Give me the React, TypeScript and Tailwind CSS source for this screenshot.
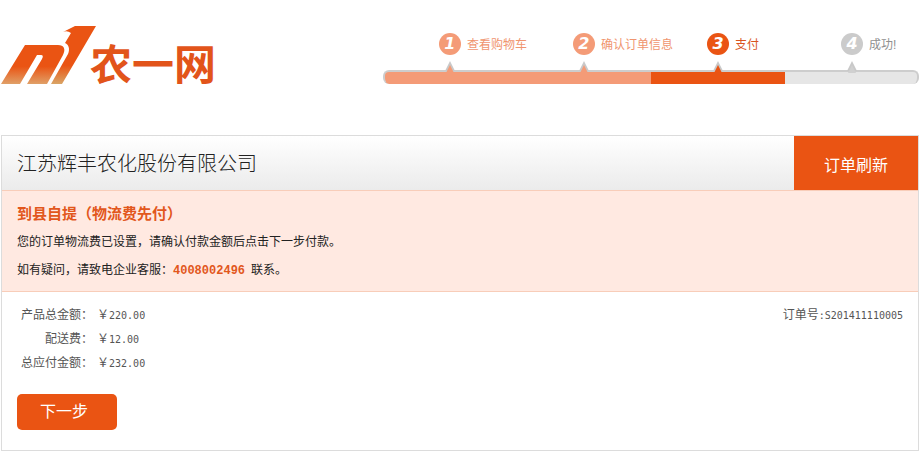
import clsx from "clsx";

type StepState = "done" | "current" | "todo";

const steps: { label: string; state: StepState }[] = [
  { label: "查看购物车", state: "done" },
  { label: "确认订单信息", state: "done" },
  { label: "支付", state: "current" },
  { label: "成功!", state: "todo" },
];

const amounts = [
  { label: "产品总金额：", value: "220.00" },
  { label: "配送费：", value: "12.00" },
  { label: "总应付金额：", value: "232.00" },
];

const badgeColors: Record<StepState, string> = {
  done: "bg-[#f49b77]",
  current: "bg-[#ea5413]",
  todo: "bg-[#cbcbcb]",
};

const labelColors: Record<StepState, string> = {
  done: "text-[#f0956f]",
  current: "text-[#d9531e]",
  todo: "text-[#909090]",
};

const barColors: Record<StepState, string> = {
  done: "bg-[#f49b77]",
  current: "bg-[#ea5413]",
  todo: "bg-[#e6e6e6]",
};

const notchColors: Record<StepState, string> = {
  done: "fill-[#f49b77]",
  current: "fill-[#ea5413]",
  todo: "fill-[#d0d0d0]",
};

function Logo() {
  return (
    <a href="#" className="flex items-end text-[#e2541a]">
      <svg viewBox="0 0 96 58" className="-mr-1.5 h-[58px] w-[96px]" aria-hidden="true">
        <defs>
          <linearGradient id="logo-fill" x1="0" y1="0" x2="0" y2="1">
            <stop offset="0.55" stopColor="#ea5413" />
            <stop offset="1" stopColor="#e0a068" />
          </linearGradient>
          <linearGradient id="logo-fill-tall" x1="0" y1="0" x2="0" y2="1">
            <stop offset="0.68" stopColor="#ea5413" />
            <stop offset="1" stopColor="#d9a566" />
          </linearGradient>
        </defs>
        <path
          fill="url(#logo-fill)"
          d="M25 19H58C64 19 66 23 63 29L47 58H27L42 33Q44 29 41 29H37L20 58H1Z"
        />
        <path
          fill="url(#logo-fill-tall)"
          d="M75 0H96L62 58H51L68 28C70 23 69 19 65 17L71 7Q67 4 63 6Z"
        />
      </svg>
      <span className="text-[42px] leading-[36px] font-bold">农一网</span>
    </a>
  );
}

function Steps() {
  return (
    <ol className="grid w-7/12 grid-cols-4 pt-[33px]">
      {steps.map((step, i) => (
        <li key={step.label} className="flex flex-col">
          <div className={clsx("flex items-center gap-[6px] pl-14 whitespace-nowrap", labelColors[step.state])}>
            <span
              className={clsx(
                "flex size-[22px] shrink-0 items-center justify-center rounded-full font-['DejaVu_Sans'] text-base leading-[22px] font-bold text-white italic",
                badgeColors[step.state],
              )}
            >
              {i + 1}
            </span>
            <span className="pt-0.5">{step.label}</span>
          </div>
          <svg viewBox="0 0 14 16" className="relative z-10 mt-[6px] -mb-[7px] h-4 w-[14px] self-center" aria-hidden="true">
            <path d="M7 0L12 10H2Z" className="fill-[#c9c9c9]" />
            <path d="M7 4L11 12H3Z" className={notchColors[step.state]} />
          </svg>
          <div
            className={clsx(
              "h-[14px] border-t-2 border-[#cdcdcd]",
              i === 0 && "rounded-l-md border-l-2",
              i === steps.length - 1 && "rounded-r-md border-r-2",
              barColors[step.state],
            )}
          />
        </li>
      ))}
    </ol>
  );
}

export default function App() {
  return (
    <div className="font-['Liberation_Sans','Noto_Sans_CJK_SC',sans-serif] text-xs text-[#555]">
      <header className="flex items-start justify-between pb-[51px]">
        <div className="pt-[26px]">
          <Logo />
        </div>
        <Steps />
      </header>

      <main className="ml-px border border-[#dcdcdc]">
        <div className="flex items-stretch justify-between bg-linear-to-b from-white to-[#ebebeb]">
          <h1 className="px-[15px] pt-0.5 text-xl leading-[52px] font-light text-[#222]">江苏辉丰农化股份有限公司</h1>
          <button type="button" className="bg-[#ea5413] px-[30px] pt-1.5 text-base text-white">
            订单刷新
          </button>
        </div>

        <section className="border-y border-[#f8cdb9] bg-[#ffe9e1] px-[15px] pt-[9px] pb-[6px] leading-7 text-[#222]">
          <h2 className="text-[15px] leading-7 font-bold text-[#e2571c]">到县自提（物流费先付）</h2>
          <p>您的订单物流费已设置，请确认付款金额后点击下一步付款。</p>
          <p>
            如有疑问，请致电企业客服：
            <strong className="font-['Liberation_Mono',monospace] font-bold text-[#e2571c]">4008002496</strong>
            <span className="ml-[6px]">联系。</span>
          </p>
        </section>

        <section className="px-[15px] pt-[11px] pb-5">
          <div className="flex items-start justify-between">
            <dl className="grid grid-cols-[auto_auto] gap-x-1 pl-1 leading-6">
              {amounts.map((amount) => (
                <div key={amount.label} className="col-span-2 grid grid-cols-subgrid">
                  <dt className="text-right">{amount.label}</dt>
                  <dd>
                    ￥
                    <span className="font-['DejaVu_Sans_Mono',monospace] text-[10px] leading-none">{amount.value}</span>
                  </dd>
                </div>
              ))}
            </dl>
            <p className="leading-6">
              订单号
              <span className="font-['DejaVu_Sans_Mono',monospace] text-[10px] leading-none">:S201411110005</span>
            </p>
          </div>
          <button type="button" className="mt-[19px] h-9 w-[100px] rounded-[5px] bg-[#ea5413] pr-[6px] text-base text-white">
            下一步
          </button>
        </section>
      </main>
    </div>
  );
}
